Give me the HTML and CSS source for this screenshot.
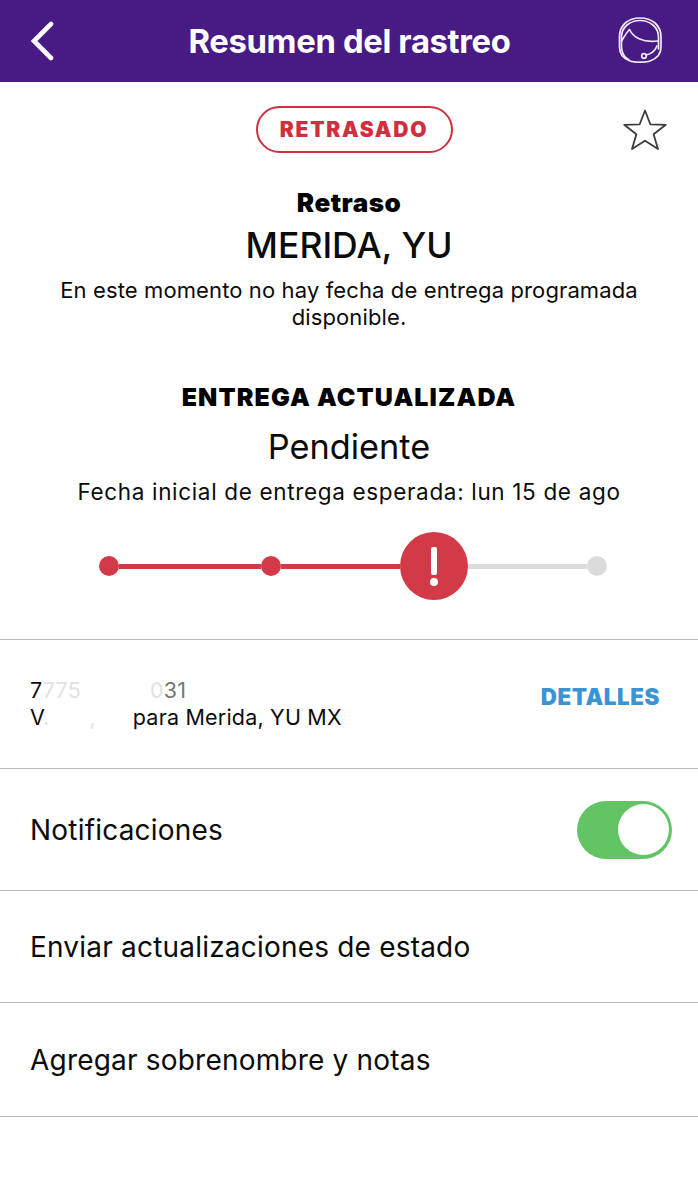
FILE: index.html
```html
<!DOCTYPE html>
<html lang="es">
<head>
<meta charset="utf-8">
<title>Resumen del rastreo</title>
<link rel="stylesheet" href="styles.css">
</head>
<body>
<header class="topbar">
  <svg class="back" width="26" height="40" viewBox="0 0 26 40"><path d="M22 3 L5 20 L22 37" fill="none" stroke="#fff" stroke-width="4.600" stroke-linecap="round" stroke-linejoin="miter"/></svg>
  <h1 class="title">Resumen del rastreo</h1>
  <svg class="agent" width="45" height="47" viewBox="0 0 45 47" fill="none" stroke="#f0e8f6" stroke-width="1.700" stroke-linecap="round" stroke-linejoin="round">
    <path d="M1.500 20 C1.500 8 10 1 22 1 C34 1 43 8 43 20 V30 C43 38 38 42 32 44 C28 45.500 16 45.500 12 44 C6 42 1.500 38 1.500 30 Z"/>
    <path d="M3.500 32 V20 C3.500 10 12 3.500 22 3.500 C32 3.500 40.500 10 40.500 20 V32"/>
    <path d="M3.500 24 C6 20 9 15 11.500 12.500 C15 20 24 26 40 24"/>
    <path d="M3.500 32 C4.500 37 7 41 11 43"/>
    <circle cx="26" cy="39" r="2.300"/>
    <path d="M28 38 C33 37 37 34 39 29"/>
  </svg>
</header>

<main>
  <section class="status">
    <div class="badge-row">
      <span class="badge">RETRASADO</span>
      <svg class="star" width="46" height="44" viewBox="0 0 46 44"><path d="M23 2.500 L28.300 16.300 L43.800 16.800 L31.600 26.200 L36 41 L23 32.700 L10 41 L14.400 26.200 L2.200 16.800 L17.700 16.300 Z" fill="none" stroke="#3c3c3c" stroke-width="1.800" stroke-linejoin="round"/></svg>
    </div>
    <p class="heavy-label">Retraso</p>
    <p class="place">MERIDA, YU</p>
    <p class="note">En este momento no hay fecha de entrega programada disponible.</p>
    <p class="heavy-label caps">ENTREGA ACTUALIZADA</p>
    <p class="place pending">Pendiente</p>
    <p class="note single">Fecha inicial de entrega esperada: lun 15 de ago</p>
    <div class="progress">
      <span class="dot red"></span>
      <span class="line red long"></span>
      <span class="dot red"></span>
      <span class="line red short"></span>
      <span class="alert"><span class="alert-bar"></span><span class="alert-point"></span></span>
      <span class="line grey short"></span>
      <span class="dot grey"></span>
    </div>
  </section>

  <section class="row shipment">
    <div class="shipment-text">
      <div>7<span class="ghost">775</span><span class="gap"></span><span class="ghost">0</span><span class="half">3</span><span class="half">1</span></div>
      <div>V<span class="ghost">.</span><span class="gap wide"></span><span class="ghost">,</span><span class="gap small"></span>para Merida, YU MX</div>
    </div>
    <span class="details">DETALLES</span>
  </section>

  <section class="row notif">
    <span class="row-label">Notificaciones</span>
    <span class="toggle"><span class="knob"></span></span>
  </section>
  <section class="row send"><span class="row-label">Enviar actualizaciones de estado</span></section>
  <section class="row nick"><span class="row-label">Agregar sobrenombre y notas</span></section>
</main>
</body>
</html>
```
FILE: styles.css
```css
* { box-sizing: border-box; }
html, body { margin: 0; padding: 0; background: #fff; }
body { width: 698px; height: 1200px; overflow: hidden; font-family: Inter, "Liberation Sans", sans-serif; color: #0b0b0b; }
p, h1 { margin: 0; }

.topbar { height: 82px; background: #471a84; display: grid; grid-template-columns: 1fr auto 1fr; align-items: center; padding: 0 35px; }
.back { margin: -1px 0 0 -6px; }
.title { text-align: center; color: #fff; font-size: 32.800px; font-weight: 700; letter-spacing: -0.35px; margin-left: 1px; }
.agent { justify-self: end; margin-top: -1px; }

.status { height: 557px; display: flex; flex-direction: column; align-items: center; text-align: center; padding: 24px 30px 0; }
.badge-row { width: 100%; display: flex; justify-content: center; position: relative; }
.badge { width: 197px; height: 47px; margin-left: 10px; border: 2px solid #cf3041; border-radius: 24px; color: #d02f3f; font-size: 21px; font-weight: 900; letter-spacing: 1.700px; display: flex; align-items: center; justify-content: center; }
.star { position: absolute; right: 0; top: 2px; }

.heavy-label { font-size: 26px; line-height: 28px; font-weight: 900; letter-spacing: 0.5px; margin-top: 36px; color: #000; }
.heavy-label.caps { margin-top: 52px; font-size: 25px; letter-spacing: 1.100px; }
.place { font-size: 35.500px; line-height: 42px; font-weight: 500; margin-top: 8px; color: #0b0b0b; }
.place.pending { font-size: 34.300px; font-weight: 400; margin-top: 15px; }
.note { font-size: 22px; line-height: 27px; margin-top: 10px; width: 600px; letter-spacing: 0.12px; }
.note.single { margin-top: 10px; font-size: 22.500px; letter-spacing: 0.66px; width: 620px; }

.progress { width: 508px; height: 68px; margin-top: 27px; margin-left: 8px; display: flex; align-items: center; }
.dot { flex: none; width: 20px; height: 20px; border-radius: 50%; }
.dot.red { background: #d33a48; }
.dot.grey { background: #dbdbdb; }
.line { flex: none; height: 5px; }
.line.long { width: 142px; }
.line.short { width: 119px; }
.line.red { background: #d33a48; }
.line.grey { background: #dcdcdc; }
.alert { flex: none; width: 68px; height: 68px; border-radius: 50%; background: #d33a48; display: flex; flex-direction: column; align-items: center; justify-content: center; gap: 3px; }
.alert-bar { width: 6px; height: 28px; background: #fff; border-radius: 2px; }
.alert-point { width: 8px; height: 8px; background: #fff; border-radius: 50%; }

.row { display: flex; align-items: center; justify-content: space-between; padding: 0 26px 0 30px; border-top: 1px solid #b9b9b9; }
.row-label { font-size: 28px; letter-spacing: 0.2px; }
.shipment { height: 129px; align-items: flex-start; padding: 37px 38px 0 30px; }
.shipment-text { font-size: 21.500px; line-height: 27px; letter-spacing: 0.2px; }
.ghost { color: #e2e2e2; }
.half { color: #777; }
.gap { display: inline-block; width: 69px; }
.gap.wide { width: 40px; }
.gap.small { width: 37px; }
.details { color: #3b94d1; font-size: 22.300px; font-weight: 900; letter-spacing: 0.6px; line-height: 27px; margin-top: 6px; }
.notif { height: 122px; }
.send { height: 112px; }
.nick { height: 115px; border-bottom: 1px solid #b9b9b9; }
.toggle { width: 95px; height: 58px; border-radius: 29px; background: #63c466; display: flex; align-items: center; justify-content: flex-end; padding-right: 3px; }
.knob { width: 51px; height: 51px; border-radius: 50%; background: #fff; }
```
